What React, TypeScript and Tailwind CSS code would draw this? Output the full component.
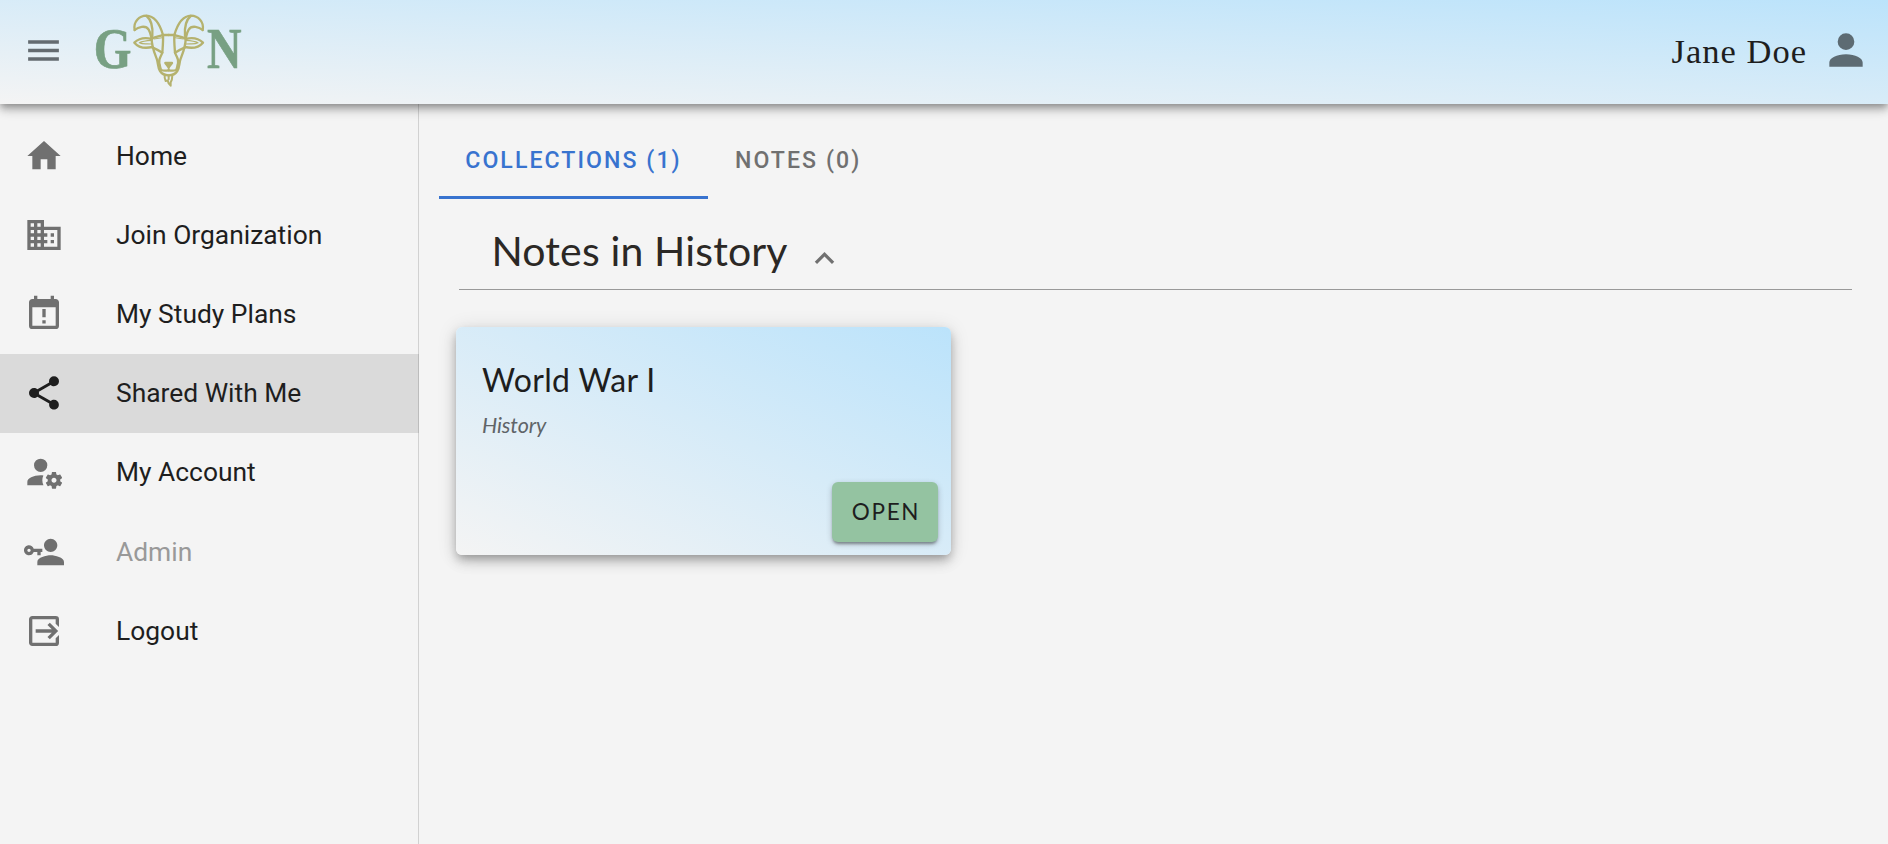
import React from "react";

const icons = {
  menu: "M3,6H21V8H3V6M3,11H21V13H3V11M3,16H21V18H3V16Z",
  account:
    "M12,4A4,4 0 0,1 16,8A4,4 0 0,1 12,12A4,4 0 0,1 8,8A4,4 0 0,1 12,4M12,14C16.42,14 20,15.79 20,18V20H4V18C4,15.79 7.58,14 12,14Z",
  home: "M10,20V14H14V20H19V12H22L12,3L2,12H5V20H10Z",
  domain:
    "M18,15H16V17H18M18,11H16V13H18M20,19H12V17H14V15H12V13H14V11H12V9H20M10,7H8V5H10M10,11H8V9H10M10,15H8V13H10M10,19H8V17H10M6,7H4V5H6M6,11H4V9H6M6,15H4V13H6M6,19H4V17H6M12,7V3H2V21H22V7H12Z",
  calendar:
    "M19,19H5V8H19M19,3H18V1H16V3H8V1H6V3H5C3.89,3 3,3.9 3,5V19A2,2 0 0,0 5,21H19A2,2 0 0,0 21,19V5C21,3.89 20.1,3 19,3M11,9H13V14H11V9M11,15.7H13V17.7H11V15.7Z",
  share:
    "M18,16.08C17.24,16.08 16.56,16.38 16.04,16.85L8.91,12.7C8.96,12.47 9,12.24 9,12C9,11.76 8.96,11.53 8.91,11.3L15.96,7.19C16.5,7.69 17.21,8 18,8A3,3 0 0,0 21,5A3,3 0 0,0 18,2A3,3 0 0,0 15,5C15,5.24 15.04,5.47 15.09,5.7L8.04,9.81C7.5,9.31 6.79,9 6,9A3,3 0 0,0 3,12A3,3 0 0,0 6,15C6.79,15 7.5,14.69 8.04,14.19L15.16,18.34C15.11,18.55 15.08,18.77 15.08,19C15.08,20.61 16.39,21.91 18,21.91C19.61,21.91 20.92,20.61 20.92,19A2.92,2.92 0 0,0 18,16.08Z",
  accountCog:
    "M10 4A4 4 0 0 0 6 8A4 4 0 0 0 10 12A4 4 0 0 0 14 8A4 4 0 0 0 10 4M17 12C16.87 12 16.76 12.09 16.74 12.21L16.55 13.53C16.25 13.66 15.96 13.82 15.7 14L14.46 13.5C14.35 13.5 14.22 13.5 14.15 13.63L13.15 15.36C13.09 15.47 13.11 15.6 13.21 15.68L14.27 16.5C14.25 16.67 14.24 16.83 14.24 17C14.24 17.17 14.25 17.33 14.27 17.5L13.21 18.32C13.12 18.4 13.09 18.53 13.15 18.64L14.15 20.37C14.21 20.5 14.34 20.5 14.46 20.5L15.7 20C15.96 20.18 16.24 20.35 16.55 20.47L16.74 21.79C16.76 21.91 16.86 22 17 22H19C19.11 22 19.22 21.91 19.24 21.79L19.43 20.47C19.73 20.34 20 20.18 20.27 20L21.5 20.5C21.63 20.5 21.76 20.5 21.83 20.37L22.83 18.64C22.89 18.53 22.86 18.4 22.77 18.32L21.7 17.5C21.72 17.33 21.74 17.17 21.74 17C21.74 16.83 21.73 16.67 21.7 16.5L22.76 15.68C22.85 15.6 22.88 15.47 22.82 15.36L21.82 13.63C21.76 13.5 21.63 13.5 21.5 13.5L20.27 14C20 13.82 19.73 13.65 19.42 13.53L19.23 12.21C19.22 12.09 19.11 12 19 12H17M10 14C5.58 14 2 15.79 2 18V20H11.68A7 7 0 0 1 11 17A7 7 0 0 1 11.64 14.09C11.11 14.03 10.56 14 10 14M18 15.5C18.83 15.5 19.5 16.17 19.5 17C19.5 17.84 18.83 18.5 18 18.5C17.16 18.5 16.5 17.84 16.5 17C16.5 16.17 17.17 15.5 18 15.5Z",
  accountKey:
    "M11 10V12H10V14H8V12H5.83C5.42 13.17 4.31 14 3 14C1.34 14 0 12.66 0 11S1.34 8 3 8C4.31 8 5.42 8.83 5.83 10H11M3 10C2.45 10 2 10.45 2 11S2.45 12 3 12 4 11.55 4 11 3.55 10 3 10M16 14C18.67 14 24 15.34 24 18V20H8V18C8 15.34 13.33 14 16 14M16 12C13.8 12 12 10.21 12 8S13.8 4 16 4 20 5.79 20 8 18.21 12 16 12Z",
  logout:
    "M14.08,15.59L16.67,13H7V11H16.67L14.08,8.41L15.5,7L20.5,12L15.5,17L14.08,15.59M19,3A2,2 0 0,1 21,5V9.67L19,7.67V5H5V19H19V16.33L21,14.33V19A2,2 0 0,1 19,21H5C3.89,21 3,20.1 3,19V5C3,3.89 3.89,3 5,3H19Z",
  chevronUp: "M7.41,15.41L12,10.83L16.59,15.41L18,14L12,8L6,14L7.41,15.41Z",
};

function Icon({ name, className }: { name: keyof typeof icons; className?: string }) {
  return (
    <svg viewBox="0 0 24 24" fill="currentColor" fillRule="evenodd" className={className} aria-hidden="true">
      <path d={icons[name]} />
    </svg>
  );
}

/* One half of the goat's head; the other half is its mirror image. */
function GoatHalf() {
  return (
    <>
      <path d="M14 66C9 42 28 23 49 23C77 24 90 50 99 81" />
      <path d="M14 66C24 57 47 50 56 65C61 73 62 82 65 92" />
      <path d="M50 24C64 36 69 58 67 84" />
      <path d="M65 91C76 87 88 84 99 81H116" />
      <path d="M65 93C46 88 27 91 13 104C26 119 46 122 67 117" />
      <path d="M65 97C50 98 38 99 28 104C40 110 48 106 63 108" strokeWidth="3.5" />
      <path d="M65 92C65 116 74 136 80 152C85 165 83 179 90 189C97 200 106 202 116 202" />
      <path d="M72 93L98 89" strokeWidth="3" />
      <path d="M67 118C78 123 88 128 97 134" />
      <path d="M99 82C100 100 98 118 97 134C92 148 84 155 88 166C91 175 90 182 94 186C101 189 108 188 116 187" />
    </>
  );
}

function Logo() {
  return (
    <svg viewBox="0 0 510 270" className="ml-[16px] h-[90px] w-[170px]" aria-label="GOAN">
      <g
        fill="#78a083"
        stroke="#78a083"
        strokeWidth="2"
        fontFamily="'Liberation Serif', serif"
        fontWeight="700"
      >
        <text transform="translate(41 189) scale(0.85 1)" fontSize="171">
          G
        </text>
        <text transform="translate(381 189) scale(0.84 1)" fontSize="171">
          N
        </text>
      </g>
      <g
        transform="translate(150 9)"
        fill="none"
        stroke="#b5b26e"
        strokeWidth="7"
        strokeLinecap="round"
        strokeLinejoin="round"
      >
        <GoatHalf />
        <g transform="translate(232 0) scale(-1 1)">
          <GoatHalf />
        </g>
        <path d="M106 165H126L116 178Z" fill="#b5b26e" />
        <path d="M116 178V187" strokeWidth="5" />
        <path d="M104 203C103 210 105 215 107 219L113 217L116 226L122 233L122 223C127 216 127 210 127 202M116 204V214" strokeWidth="6" />
      </g>
    </svg>
  );
}

type NavItem = { label: string; icon: keyof typeof icons; active?: boolean; disabled?: boolean };

const navItems: NavItem[] = [
  { label: "Home", icon: "home" },
  { label: "Join Organization", icon: "domain" },
  { label: "My Study Plans", icon: "calendar" },
  { label: "Shared With Me", icon: "share", active: true },
  { label: "My Account", icon: "accountCog" },
  { label: "Admin", icon: "accountKey", disabled: true },
  { label: "Logout", icon: "logout" },
];

export default function App() {
  return (
    <div className="flex h-[844px] w-[1888px] flex-col overflow-hidden bg-[#f4f4f4] font-[Roboto,sans-serif] text-[#1e1e1e]">
      <header className="z-10 flex h-[104px] shrink-0 items-center bg-linear-to-tr from-[#f4f4f4] to-[#bbe3fb] pr-[17px] pb-[4px] pl-[23px] shadow-[0_3px_7px_-1px_rgba(0,0,0,0.3),0_7px_8px_0_rgba(0,0,0,0.14),0_2px_16px_0_rgba(0,0,0,0.12)]">
        <button className="text-[#646b70]" aria-label="Menu">
          <Icon name="menu" className="h-[41px] w-[41px]" />
        </button>
        <Logo />
        <div className="ml-auto flex items-center gap-[14px]">
          <span className="pt-[3px] font-['Liberation_Serif',serif] text-[34.5px] leading-none tracking-[1px]">
            Jane Doe
          </span>
          <Icon name="account" className="h-[50px] w-[50px] text-[#5d6b73]" />
        </div>
      </header>

      <div className="flex min-h-0 flex-1">
        <nav className="w-[419px] shrink-0 border-r border-[#d1d1d1] pt-[12.5px]">
          {navItems.map((item) => (
            <a
              key={item.label}
              className={
                item.active
                  ? "-mr-px flex h-[79.2px] items-center border-r border-[#bcbcbc] bg-[#dadada] pb-px pl-[23.5px]"
                  : "flex h-[79.2px] items-center pb-px pl-[23.5px]"
              }
            >
              <Icon
                name={item.icon}
                className={item.active ? "h-[40px] w-[40px] text-[#1e1e1e]" : "h-[40px] w-[40px] text-[#707070]"}
              />
              <span
                className={
                  item.disabled
                    ? "ml-[52.5px] pt-[1.6px] text-[26.4px] text-[#999999]"
                    : "ml-[52.5px] pt-[1.6px] text-[26.4px]"
                }
              >
                {item.label}
              </span>
            </a>
          ))}
        </nav>

        <main className="flex-1 pt-[16px] pl-[20px]">
          <div className="flex h-[79px] text-[23.1px] font-medium tracking-[2.06px]">
            <button className="flex w-[269px] items-center justify-center border-b-[3px] border-[#3873cf] pt-[7px] text-[#3873cf]">
              COLLECTIONS (1)
            </button>
            <button className="flex items-center border-b-[3px] border-transparent px-[27px] pt-[7px] text-[#707070]">
              NOTES (0)
            </button>
          </div>

          <section className="mr-[36px] ml-[20px]">
            <div className="flex h-[91px] items-center border-b border-[#999999] pt-[13px] pl-[32.5px] font-[Lato,sans-serif] text-[#2b2825]">
              <h1 className="text-[41px] leading-none tracking-[0.15px]">Notes in History</h1>
              <Icon name="chevronUp" className="mt-[16px] ml-[17px] h-[39px] w-[39px] text-[#707070]" />
            </div>
          </section>

          <article className="mt-[37px] ml-[17px] flex h-[228px] w-[495px] flex-col rounded-[6px] bg-linear-to-tr from-[#f4f4f4] to-[#bbe3fb] px-[26px] pt-[35px] font-[Lato,sans-serif] shadow-[0_5px_9px_-2px_rgba(0,0,0,0.24),0_7px_14px_0_rgba(0,0,0,0.14),0_2px_20px_0_rgba(0,0,0,0.12)]">
            <h2 className="text-[32px] leading-[36px] tracking-[0.35px]">World War I</h2>
            <p className="mt-[15px] text-[21.5px] leading-[24px] tracking-[-0.1px] text-[#5f6468] italic">History</p>
            <button className="mt-auto mr-[-13px] mb-[13px] h-[60px] w-[106px] self-end rounded-[6px] bg-[#94c3a1] pl-[2px] text-[22.5px] tracking-[1.7px] shadow-[0_3px_3px_-1px_rgba(0,0,0,0.35),0_2px_6px_0_rgba(0,0,0,0.2)]">
              OPEN
            </button>
          </article>
        </main>
      </div>
    </div>
  );
}
